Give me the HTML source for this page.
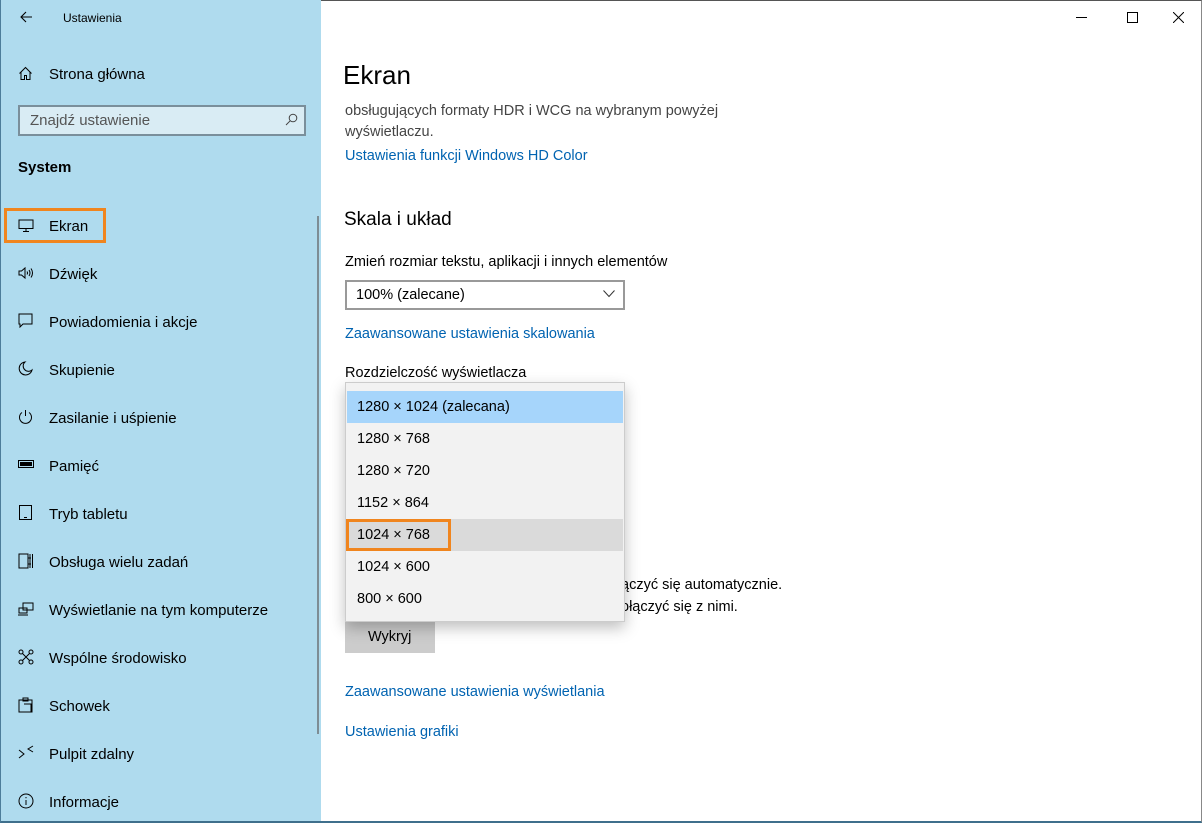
<!DOCTYPE html>
<html><head><meta charset="utf-8"><style>
*{margin:0;padding:0;box-sizing:border-box}
body{width:1202px;height:823px;overflow:hidden;background:#fff;font-family:"Liberation Sans",sans-serif;color:#000;position:relative}
.side{position:absolute;left:0;top:0;width:321px;height:823px;background:#afdbee;border-left:1px solid #4d7d9a;border-bottom:2px solid #3f6f8c}
.main{position:absolute;left:321px;top:0;right:0;height:823px;border-right:1px solid #888;border-bottom:2px solid #3f6f8c;border-top:1px solid #555}
.t{position:absolute;white-space:nowrap}
.nav{position:absolute;left:48px;font-size:15px;color:#000;margin-top:1px}
.ic{position:absolute;left:17px}
.link{color:#0063b1;font-size:14.5px;margin-top:1px}
.opt{position:absolute;left:1px;width:276px;height:32px;font-size:14.5px;line-height:32px;padding-left:10px}
</style></head><body>
<div class="side">
 <svg class="ic" style="left:18px;top:10px" width="14" height="14" viewBox="0 0 14 14"><path d="M13 7H2M7 2L2 7l5 5" fill="none" stroke="#000" stroke-width="1.1"/></svg>
 <div class="t" style="left:62px;top:11px;font-size:12px">Ustawienia</div>
 <svg class="ic" style="top:66px" width="15" height="15" viewBox="0 0 15 15"><path d="M1.5 7.5L7.5 1.5l6 6M3 6v7.5h3.5V9.5h2v4H12V6" fill="none" stroke="#000" stroke-width="1"/></svg>
 <div class="nav" style="top:65px">Strona główna</div>
 <div style="position:absolute;left:17px;top:105px;width:288px;height:31px;border:2px solid #7a8f9b;background:#d9ecf4"></div>
 <div class="t" style="left:29px;top:112px;font-size:15px;color:#555">Znajdź ustawienie</div>
 <svg class="ic" style="left:284px;top:113px" width="13" height="13" viewBox="0 0 13 13"><circle cx="8" cy="5" r="3.8" fill="none" stroke="#444"/><path d="M5.3 7.7L1 12" stroke="#444"/></svg>
 <div class="t" style="left:17px;top:159px;font-size:15px;font-weight:bold">System</div>
 <div style="position:absolute;left:3px;top:208px;width:102px;height:35px;border:3px solid #f0851e"></div>
 <svg class="ic" style="top:219px" width="16" height="13" viewBox="0 0 16 13"><rect x="1" y="1" width="14" height="8.5" fill="none" stroke="#000"/><path d="M8 10v2M5 12.5h6" stroke="#000"/></svg>
 <div class="nav" style="top:217px">Ekran</div>
 <div style="position:absolute;left:316px;top:216px;width:2px;height:518px;background:#7d8d95"></div>
 <svg class="ic" style="top:266px" width="16" height="14" viewBox="0 0 16 14"><path d="M1 5h2.5L7 2v10L3.5 9H1z" fill="none" stroke="#000"/><path d="M9 5.5q1 1.5 0 3M11 4q2 3 0 6M13 2.5q3 4.5 0 9" fill="none" stroke="#000"/></svg>
 <div class="nav" style="top:265px">Dźwięk</div>
 <svg class="ic" style="top:313px" width="15" height="15"><path d="M1 1h13v10H5l-3 3v-3H1z" fill="none" stroke="#000"/></svg>
 <div class="nav" style="top:313px">Powiadomienia i akcje</div>
 <svg class="ic" style="top:361px" width="15" height="15"><path d="M7 1a6.5 6.5 0 1 0 7 8A5 5 0 0 1 7 1z" fill="none" stroke="#000"/></svg>
 <div class="nav" style="top:361px">Skupienie</div>
 <svg class="ic" style="top:409px" width="15" height="15"><path d="M4 3.5a6 6 0 1 0 7 0M7.5 1v6" fill="none" stroke="#000"/></svg>
 <div class="nav" style="top:409px">Zasilanie i uśpienie</div>
 <svg class="ic" style="top:460px" width="16" height="9"><rect x=".5" y=".5" width="15" height="7" fill="none" stroke="#000"/><rect x="2" y="2" width="12" height="4"/></svg>
 <div class="nav" style="top:457px">Pamięć</div>
 <svg class="ic" style="top:505px" width="15" height="15"><rect x="1.5" y=".5" width="12" height="14" fill="none" stroke="#000"/><path d="M6 12.5h3" stroke="#000"/></svg>
 <div class="nav" style="top:505px">Tryb tabletu</div>
 <svg class="ic" style="top:553px" width="16" height="16"><path d="M1 1h9v14H1zM12 1v14M14.5 1v14M10 5h3M10 11h3" fill="none" stroke="#000"/></svg>
 <div class="nav" style="top:553px">Obsługa wielu zadań</div>
 <svg class="ic" style="top:602px" width="16" height="14"><path d="M5 1h10v7H5zM1 6h8v5H1zM0 13h10" fill="none" stroke="#000"/></svg>
 <div class="nav" style="top:601px">Wyświetlanie na tym komputerze</div>
 <svg class="ic" style="top:649px" width="16" height="16"><circle cx="3" cy="3" r="2" fill="none" stroke="#000"/><circle cx="13" cy="3" r="2" fill="none" stroke="#000"/><circle cx="3" cy="13" r="2" fill="none" stroke="#000"/><circle cx="13" cy="13" r="2" fill="none" stroke="#000"/><path d="M4.5 4.5l7 7M11.5 4.5l-7 7" stroke="#000"/></svg>
 <div class="nav" style="top:649px">Wspólne środowisko</div>
 <svg class="ic" style="top:697px" width="15" height="16"><path d="M1 3h13v12H1zM5 1h5v3H5zM6 7h7v8" fill="none" stroke="#000"/></svg>
 <div class="nav" style="top:697px">Schowek</div>
 <svg class="ic" style="top:745px" width="16" height="16"><path d="M1 5l5 4-5 4M15 1l-5 3 5 3" fill="none" stroke="#000"/></svg>
 <div class="nav" style="top:745px">Pulpit zdalny</div>
 <svg class="ic" style="top:793px" width="16" height="16"><circle cx="8" cy="8" r="7" fill="none" stroke="#000"/><path d="M8 7v5M8 4v1.3" stroke="#000"/></svg>
 <div class="nav" style="top:793px">Informacje</div>
</div>
<div class="main">
 <div style="position:absolute;left:755px;top:16px;width:11px;height:1px;background:#000"></div>
 <div style="position:absolute;left:806px;top:11px;width:11px;height:11px;border:1px solid #000"></div>
 <svg style="position:absolute;left:852px;top:11px" width="11" height="11"><path d="M0 0l11 11M11 0L0 11" stroke="#000"/></svg>
 <div class="t" style="left:22px;top:59px;font-size:26px">Ekran</div>
 <div class="t" style="left:24px;top:100px;font-size:14.5px;color:#444;line-height:21px">obsługujących formaty HDR i WCG na wybranym powyżej<br>wyświetlaczu.</div>
 <div class="t link" style="left:24px;top:146px">Ustawienia funkcji Windows HD Color</div>
 <div class="t" style="left:23px;top:208px;font-size:19px">Skala i układ</div>
 <div class="t" style="left:24px;top:253px;font-size:14.5px">Zmień rozmiar tekstu, aplikacji i innych elementów</div>
 <div style="position:absolute;left:24px;top:279px;width:280px;height:30px;border:2px solid #999"></div>
 <div class="t" style="left:35px;top:286px;font-size:14.5px">100% (zalecane)</div>
 <svg style="position:absolute;left:282px;top:289px" width="12" height="8"><path d="M.5 .5l5.5 6 5.5-6" fill="none" stroke="#333"/></svg>
 <div class="t link" style="left:24px;top:324px">Zaawansowane ustawienia skalowania</div>
 <div class="t" style="left:24px;top:364px;font-size:14.5px">Rozdzielczość wyświetlacza</div>
 <div class="t" style="left:300px;top:573px;font-size:14.5px;line-height:22px">ączyć się automatycznie.<br>ołączyć się z nimi.</div>
 <div style="position:absolute;left:24px;top:620px;width:90px;height:32px;background:#ccc"></div>
 <div class="t" style="left:47px;top:628px;font-size:14.5px">Wykryj</div>
 <div class="t link" style="left:24px;top:682px">Zaawansowane ustawienia wyświetlania</div>
 <div class="t link" style="left:24px;top:722px">Ustawienia grafiki</div>
 <div style="position:absolute;left:24px;top:381px;width:280px;height:240px;background:#f2f2f2;border:1px solid #ccc;box-shadow:0 6px 14px rgba(0,0,0,.25)">
  <div class="opt" style="top:8px;background:#a6d5fb">1280 × 1024 (zalecana)</div>
  <div class="opt" style="top:40px">1280 × 768</div>
  <div class="opt" style="top:72px">1280 × 720</div>
  <div class="opt" style="top:104px">1152 × 864</div>
  <div class="opt" style="top:136px;background:#dadada">1024 × 768</div>
  <div style="position:absolute;left:0;top:136px;width:105px;height:32px;border:3px solid #f0851e"></div>
  <div class="opt" style="top:168px">1024 × 600</div>
  <div class="opt" style="top:200px">800 × 600</div>
 </div>
</div>
</body></html>
